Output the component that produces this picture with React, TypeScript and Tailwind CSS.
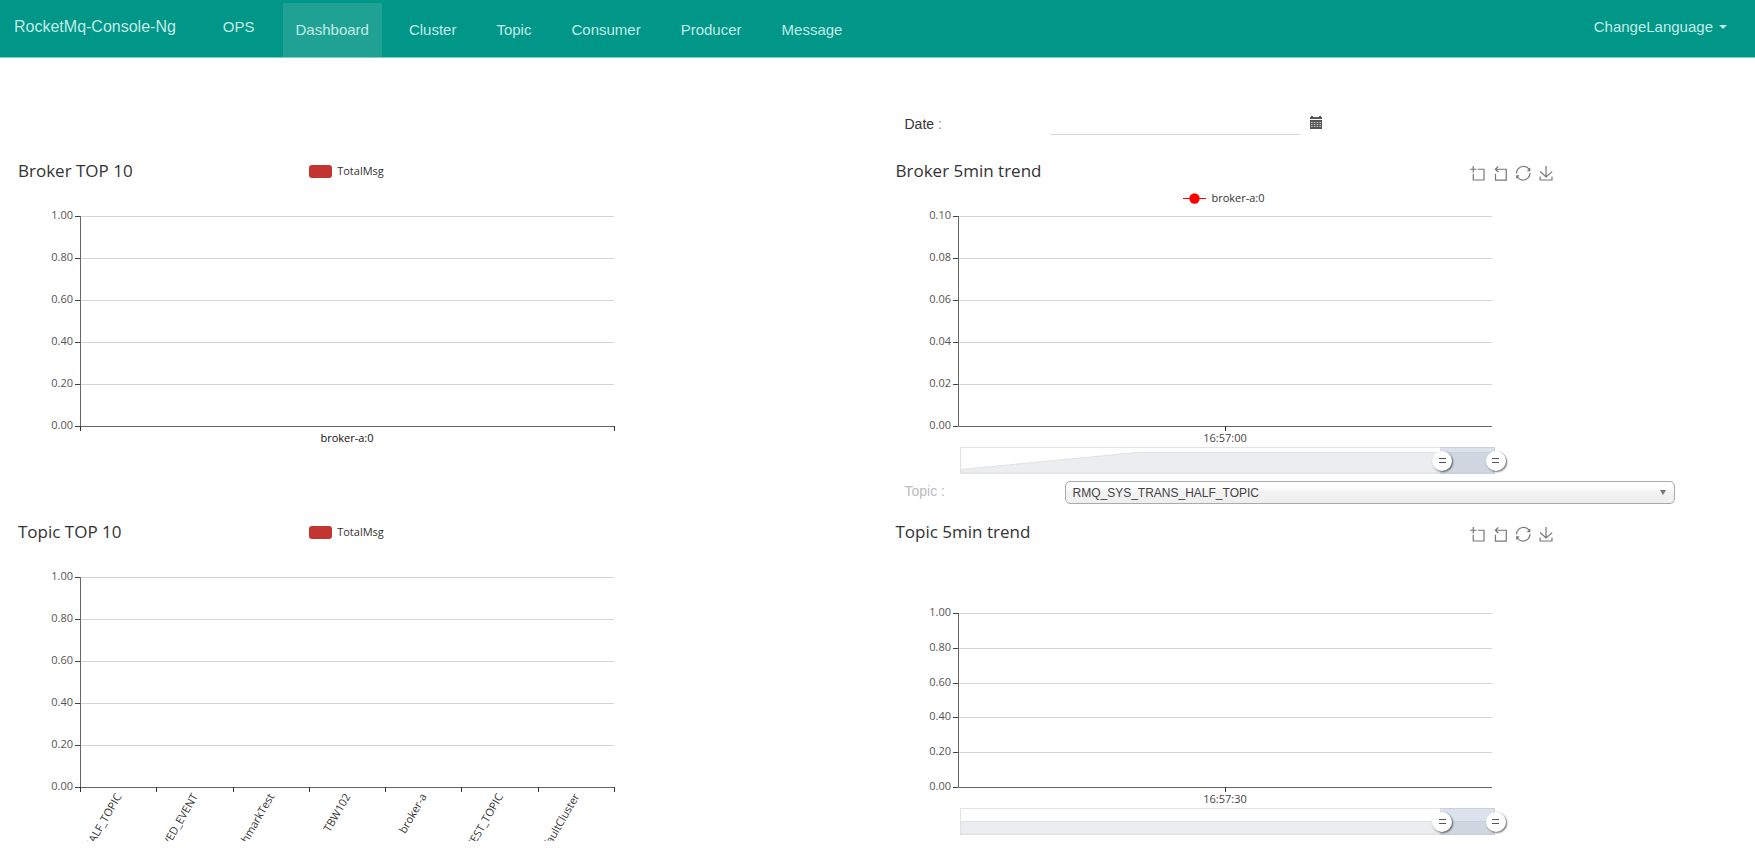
import { useId, type ReactNode } from "react";

const PLOT_WIDTH = 534;
const PLOT_LEFT = 67;
const CANVAS_WIDTH = 667;

const nav = ["Dashboard", "Cluster", "Topic", "Consumer", "Producer", "Message"];

const tools = [
  {
    label: "Area zooming",
    d: "M0,13.5h26.9 M13.5,26.9V0 M32.1,13.5H58V58H13.5 V32.1",
  },
  {
    label: "Restore area zooming",
    d: "M22,1.4L9.9,13.5l12.3,12.3 M10.3,13.5H54.9v44.6 H10.3v-26",
  },
  {
    label: "Restore",
    d: "M47,18.9h9.8V8.7 M56.3,20.1 C52.1,9,40.5,0.6,26.8,2.1C12.6,3.7,1.6,16.2,2.1,30.6 M13,41.1H3.1v10.2 M3.7,39.9c4.2,11.1,15.8,19.5,29.5,18 c14.2-1.6,25.2-14.1,24.7-28.5",
  },
  {
    label: "Save as image",
    d: "M4.7,22.9L29.3,45.5L54.7,23.4M4.6,43.6L4.6,58L53.8,58L53.8,43.6M29.2,45.1L29.2,0",
  },
];

function Toolbox() {
  return (
    <div className="flex gap-[9px] pt-1 pr-[5px]">
      {tools.map(({ label, d }) => (
        <button key={label} type="button" aria-label={label}>
          <svg
            className="size-3.5 overflow-visible"
            viewBox="0 0 58 58"
            fill="none"
            stroke="#777"
            strokeWidth="5"
            aria-hidden
          >
            <path d={d} />
          </svg>
        </button>
      ))}
    </div>
  );
}

function BarLegend() {
  return (
    <div className="flex items-center gap-[5px] text-[11px] leading-4 text-[#333]">
      <span className="h-[13px] w-[23px] rounded-[3px] bg-[#c23531]" />
      TotalMsg
    </div>
  );
}

function LineLegend({ label }: { label: string }) {
  return (
    <div className="flex items-center gap-[5px] text-[11px] leading-4 text-[#333]">
      <svg className="h-3 w-[23px]" viewBox="0 0 23 12" aria-hidden>
        <path d="M0 6.5h23" stroke="#f00" />
        <circle cx="11.5" cy="6.5" r="5.2" fill="#f00" />
      </svg>
      {label}
    </div>
  );
}

type PlotProps = {
  height: number;
  bottom: number;
  yLabels: string[];
  xLabels: string[];
  boundaryTicks?: boolean;
  rotate?: boolean;
};

function Plot({ height, bottom, yLabels, xLabels, boundaryTicks, rotate }: PlotProps) {
  const right = PLOT_LEFT + PLOT_WIDTH;
  const band = PLOT_WIDTH / xLabels.length;
  const ticks = boundaryTicks
    ? [...xLabels.map((_, i) => PLOT_LEFT + i * band), right]
    : xLabels.map((_, i) => PLOT_LEFT + (i + 0.5) * band);

  return (
    <svg
      className="block w-full"
      viewBox={`0 -8 ${CANVAS_WIDTH} ${height + bottom + 8}`}
      fontSize="11"
    >
      {yLabels.map((label, i) => {
        const y = Math.round((height * i) / (yLabels.length - 1)) + 0.5;
        return (
          <g key={label}>
            {i < yLabels.length - 1 && (
              <path d={`M${PLOT_LEFT} ${y}H${right}`} stroke="#d4d4d4" />
            )}
            <path d={`M${PLOT_LEFT - 5} ${y}h5`} stroke="#444" />
            <text x={PLOT_LEFT - 7} y={y + 2.5} textAnchor="end" fill="#555">
              {label}
            </text>
          </g>
        );
      })}
      <path
        d={`M${PLOT_LEFT + 0.5} 0V${height + 0.5}H${right}`}
        fill="none"
        stroke="#666"
      />
      {ticks.map((x) => (
        <path key={x} d={`M${Math.round(x) + 0.5} ${height}v5`} stroke="#333" />
      ))}
      {xLabels.map((label, i) => {
        const x = PLOT_LEFT + (i + 0.5) * band;
        return rotate ? (
          <text
            key={label}
            textAnchor="end"
            dominantBaseline="central"
            fill="#333"
            transform={`translate(${x} ${height + 7}) rotate(-60)`}
          >
            {label}
          </text>
        ) : (
          <text
            key={label}
            x={x}
            y={height + 16}
            textAnchor="middle"
            fill={boundaryTicks ? "#111" : "#444"}
          >
            {label}
          </text>
        );
      })}
    </svg>
  );
}

// One end of the zoom window: a white round grip with two short bars.
function ZoomHandle({ label, value }: { label: string; value: number }) {
  return (
    <input
      type="range"
      aria-label={label}
      defaultValue={value}
      className="pointer-events-none absolute inset-y-0 -left-2.5 h-full w-[calc(100%+22px)] appearance-none bg-transparent [&::-webkit-slider-thumb]:pointer-events-auto [&::-webkit-slider-thumb]:size-5 [&::-webkit-slider-thumb]:appearance-none [&::-webkit-slider-thumb]:rounded-full [&::-webkit-slider-thumb]:shadow-[1px_1px_2px_rgba(0,0,0,0.6)] [&::-webkit-slider-thumb]:[background:linear-gradient(#555,#555)_center_7px/7px_1px_no-repeat,linear-gradient(#555,#555)_center_11px/7px_1px_no-repeat,#fff]"
    />
  );
}

function DataZoom({ shadow }: { shadow: string }) {
  return (
    <div className="pr-[63px] pl-[69px]">
      <div className="relative h-[27px] border border-[#e2e2e2]">
        <svg
          className="size-full"
          viewBox="0 0 534 25"
          preserveAspectRatio="none"
          aria-hidden
        >
          <path d={shadow} fill="#ebedee" stroke="#dfe2e4" />
        </svg>
        <div className="absolute -inset-y-px left-[90%] -right-px bg-[#a7b7cc]/40" />
        <ZoomHandle label="Zoom start" value={90} />
        <ZoomHandle label="Zoom end" value={100} />
      </div>
    </div>
  );
}

function Figure({ children }: { children: ReactNode }) {
  return (
    <figure className="ml-[13px] max-w-[667px] font-['Open_Sans','Noto_Sans',sans-serif]">
      {children}
    </figure>
  );
}

function TopChart({ title, children }: { title: string; children: ReactNode }) {
  return (
    <Figure>
      <div className="mb-5 grid h-8 grid-cols-3 items-center pb-0.5">
        <h2 className="pl-[5px] text-[17px] leading-6 text-[#333]">{title}</h2>
        <div className="flex justify-center">
          <BarLegend />
        </div>
      </div>
      {children}
    </Figure>
  );
}

function TrendHeader({ title }: { title: string }) {
  return (
    <div className="flex h-8 items-center justify-between pb-0.5">
      <h2 className="pl-[5px] text-[17px] leading-6 text-[#333]">{title}</h2>
      <Toolbox />
    </div>
  );
}

const unitLabels = ["1.00", "0.80", "0.60", "0.40", "0.20", "0.00"];

export default function App() {
  const dateId = useId();
  const topicId = useId();

  return (
    <div className="min-h-screen bg-white font-['Liberation_Sans',Arial,sans-serif]">
      <header className="flex h-[58px] border-b border-[#80cbc4] bg-[#009688] text-[15px] text-[#c3ece6]">
        <a href="#" className="pt-[15px] pl-3.5 text-[16px] leading-6">
          RocketMq-Console-Ng
        </a>
        <a href="#" className="mr-7 ml-[47px] pt-[15px] leading-6">
          OPS
        </a>
        <nav className="flex gap-3.5 pt-[3px]">
          {nav.map((label) => (
            <a
              key={label}
              href="#"
              className={`px-[13px] pt-[15px] leading-6 ${
                label === "Dashboard" ? "bg-[#1fa294]" : ""
              }`}
            >
              {label}
            </a>
          ))}
        </nav>
        <button
          type="button"
          className="mr-7 ml-auto flex items-center gap-1.5 self-start pt-[15px] leading-6"
        >
          ChangeLanguage
          <span className="border-x-4 border-t-4 border-x-transparent border-t-[#c3ece6]" />
        </button>
      </header>

      <main className="grid grid-cols-2">
        <section className="pt-[98px]">
          <TopChart title="Broker TOP 10">
            <Plot
              height={210}
              bottom={55}
              yLabels={unitLabels}
              xLabels={["broker-a:0"]}
              boundaryTicks
            />
          </TopChart>
          <div className="pt-9">
            <TopChart title="Topic TOP 10">
              <Plot
                height={210}
                bottom={54}
                yLabels={unitLabels}
                xLabels={[
                  "RMQ_SYS_TRANS_HALF_TOPIC",
                  "OFFSET_MOVED_EVENT",
                  "BenchmarkTest",
                  "TBW102",
                  "broker-a",
                  "SELF_TEST_TOPIC",
                  "DefaultCluster",
                ]}
                boundaryTicks
                rotate
              />
            </TopChart>
          </div>
        </section>

        <section>
          <div className="flex h-[98px] pt-12 pl-[27px] text-[14px]">
            <label htmlFor={dateId} className="w-[146px] pt-2 leading-5 text-[#333]">
              Date <span className="text-[#888]">:</span>
            </label>
            <input
              id={dateId}
              type="text"
              className="h-[29px] w-[249px] border-b border-[#d6d6d6] outline-none"
            />
            <button type="button" aria-label="Pick a date" className="mt-2.5 ml-2.5 self-start">
              <svg className="h-[13px] w-3" viewBox="0 0 12 13" aria-hidden>
                <path d="M0 1h1V0h2v1h6V0h2v1h1v2H0z" fill="#555" />
                <path d="M0 4h12v9H0z" fill="#555" />
                <path
                  d="M1 6.5h10M1 8.5h10M1 10.5h10"
                  stroke="#ccc"
                  strokeDasharray="1.6 1.2"
                />
              </svg>
            </button>
          </div>

          <Figure>
            <TrendHeader title="Broker 5min trend" />
            <div className="flex h-5 items-center justify-center pb-px">
              <LineLegend label="broker-a:0" />
            </div>
            <Plot
              height={210}
              bottom={21}
              yLabels={["0.10", "0.08", "0.06", "0.04", "0.02", "0.00"]}
              xLabels={["16:57:00"]}
            />
            <DataZoom shadow="M0 21.5L176 4.5H534V25H0z" />
          </Figure>

          <div className="flex h-[43px] items-start pt-[7px] pr-20 pl-[27px]">
            <label htmlFor={topicId} className="w-40 text-[14px] leading-5 text-[#bbb]">
              Topic :
            </label>
            <div className="relative flex-1">
              <select
                id={topicId}
                className="block h-[23px] w-full appearance-none rounded-[5px] border border-[#aaa] bg-linear-to-b from-white from-20% via-[#f3f3f3] via-50% to-[#eee] px-[7px] text-[12px] text-[#444]"
              >
                <option>RMQ_SYS_TRANS_HALF_TOPIC</option>
              </select>
              <span className="pointer-events-none absolute top-[9px] right-[9px] border-x-3 border-t-5 border-x-transparent border-t-[#777]" />
            </div>
          </div>

          <Figure>
            <TrendHeader title="Topic 5min trend" />
            <div className="h-14" />
            <Plot height={174} bottom={21} yLabels={unitLabels} xLabels={["16:57:30"]} />
            <DataZoom shadow="M0 12.5H534V25H0z" />
          </Figure>
        </section>
      </main>
    </div>
  );
}
